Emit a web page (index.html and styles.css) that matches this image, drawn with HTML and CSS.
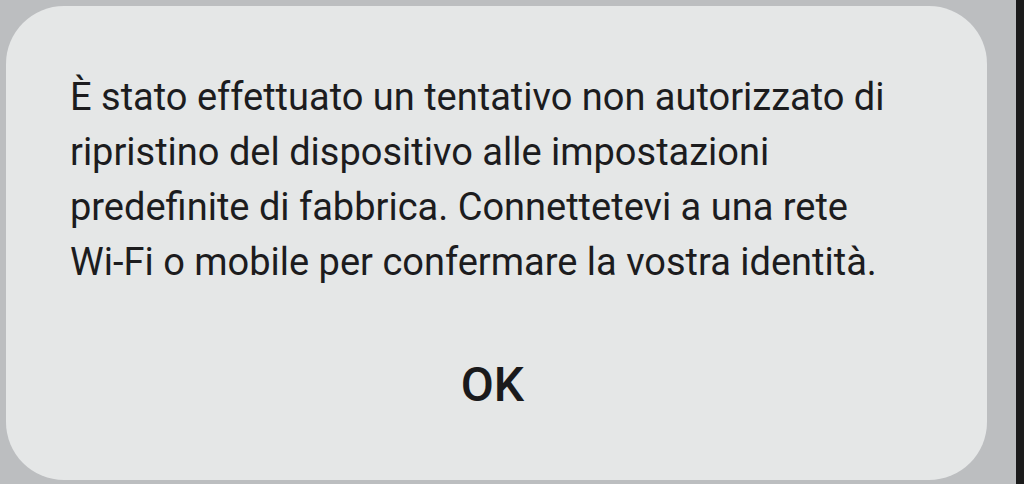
FILE: index.html
```html
<!DOCTYPE html>
<html lang="it">
<head>
    <meta charset="UTF-8">
    <meta name="viewport" content="width=device-width, initial-scale=1.0">
    <title>Ripristino dispositivo</title>
    <link rel="stylesheet" href="styles.css">
</head>
<body>
    <div class="screen">
        <div class="dialog">
            <p class="message">È stato effettuato un tentativo non autorizzato di ripristino del dispositivo alle impostazioni predefinite di fabbrica. Connettetevi a una rete <span class="nowrap">Wi-Fi</span> o mobile per confermare la vostra identità.</p>
            <button type="button" class="ok">OK</button>
        </div>
    </div>
    <div class="edge"></div>
</body>
</html>
```

FILE: styles.css
```css
html, body {
    height: 100%;
}
body {
    margin: 0;
    display: flex;
    background-color: #bcbec0;
    font-family: Roboto, "Noto Sans", sans-serif;
    overflow: hidden;
}
.screen {
    flex: 1;
    padding: 6px 29px 4px 6px;
}
.dialog {
    box-sizing: border-box;
    height: 100%;
    background-color: #e5e7e7;
    border-radius: 58px;
    padding: 64px 64px 0 64px;
    display: flex;
    flex-direction: column;
}
.message {
    margin: 0;
    font-size: 38px;
    line-height: 55px;
    color: #1c1c1e;
}
.nowrap {
    white-space: nowrap;
}
.ok {
    align-self: center;
    margin-top: 66px;
    margin-right: 8px;
    background: none;
    border: none;
    font-family: inherit;
    font-size: 48px;
    font-weight: 500;
    color: #1a1a1c;
    padding: 0;
    cursor: pointer;
}
.edge {
    width: 8px;
    background-color: #1b1b1b;
}
```
